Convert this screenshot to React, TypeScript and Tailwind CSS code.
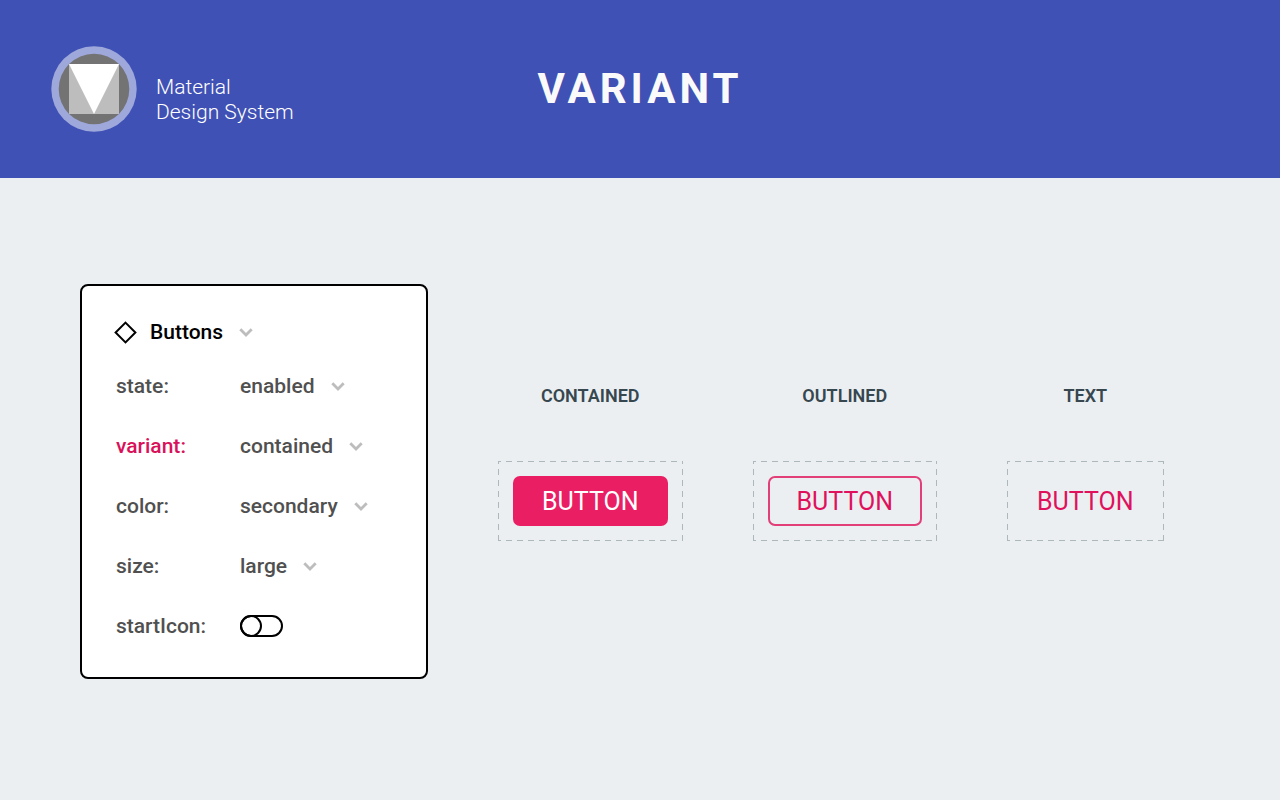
import React, { useState } from 'react';

interface SelectPropertyProps {
  name: string;
  options: string[];
  initial: string;
  highlighted?: boolean;
}

interface VariantPreviewProps {
  title: string;
  buttonClass: string;
}

const Chevron: React.FC = () => (
  <svg className="pointer-events-none w-[14px] h-[10px] shrink-0 -ml-[14px]" viewBox="0 0 14 10" fill="none" stroke="#bdbdbd" strokeWidth="2.8" aria-hidden="true">
    <path d="M1.3 2.3 7 8l5.7-5.7" />
  </svg>
);

const Logo: React.FC = () => (
  <svg className="w-[86px] h-[86px]" viewBox="0 0 86 86" aria-hidden="true">
    <circle cx="43" cy="43" r="42.7" fill="#9fa8da" />
    <circle cx="43" cy="43" r="35.3" fill="#737373" />
    <path d="M18 18h50v50H18z" fill="#bdbdbd" />
    <path d="M18 18h50L43 68z" fill="#fff" />
  </svg>
);

const SelectProperty: React.FC<SelectPropertyProps> = ({ name, options, initial, highlighted }) => {
  const [value, setValue] = useState(initial);

  return (
    <div className="flex items-center">
      <label htmlFor={name} className={`w-[124px] ${highlighted ? 'text-[#d8125b]' : 'text-[#505050]'}`}>{name}:</label>
      <select
        id={name}
        value={value}
        onChange={e => setValue(e.target.value)}
        className="appearance-none [field-sizing:content] bg-transparent pr-[30px] text-[#505050]"
      >
        {options.map(option => <option key={option}>{option}</option>)}
      </select>
      <Chevron />
    </div>
  );
};

// Dashed frame is drawn with gradients, the native dashed border is too dense
const frameClass = 'p-[15px] bg-[repeating-linear-gradient(90deg,#adb8bd_0_3px,transparent_3px_8px,#adb8bd_8px_11px),repeating-linear-gradient(90deg,#adb8bd_0_3px,transparent_3px_8px,#adb8bd_8px_11px),repeating-linear-gradient(#adb8bd_0_3px,transparent_3px_8px,#adb8bd_8px_11px),repeating-linear-gradient(#adb8bd_0_3px,transparent_3px_8px,#adb8bd_8px_11px)] [background-size:100%_1px,100%_1px,1px_100%,1px_100%] [background-position:top,bottom,left,right] bg-no-repeat';

const VariantPreview: React.FC<VariantPreviewProps> = ({ title, buttonClass }) => (
  <section className="flex flex-col items-center gap-[53px]">
    <h2 className="text-[18px] leading-6 font-semibold text-[#37474f]">{title}</h2>
    <div className={frameClass}>
      <button type="button" className={`block h-[50px] pt-[2px] rounded-[7px] text-[25px] leading-7 font-normal ${buttonClass}`}>
        BUTTON
      </button>
    </div>
  </section>
);

const App: React.FC = () => {
  const [startIcon, setStartIcon] = useState(false);

  return (
    <div className="min-h-screen bg-[#ebeff2] font-[Roboto,sans-serif]">
      <header className="grid grid-cols-[1fr_auto_1fr] items-center h-[178px] px-[51px] bg-[#3f51b5] text-white">
        <div className="flex items-center gap-[19px]">
          <Logo />
          <p className="pt-[22px] text-[21px] leading-[25px] font-light">
            Material<br />Design System
          </p>
        </div>
        <h1 className="text-[42px] leading-[48px] font-bold tracking-[4px] text-[#fafafa]">VARIANT</h1>
      </header>

      <main className="flex flex-wrap items-start gap-[70px] pt-[106px] px-20 pb-20">
        <div className="w-[348px] bg-white border-2 border-black rounded-[8px] pt-[32px] pb-[37px] px-[34px] text-[21px] leading-7 font-medium">
          <div className="flex items-center mb-[26px]">
            <svg className="overflow-visible w-[22px] h-[23px] mr-3" viewBox="0 0 22 23" fill="none" stroke="#000" strokeWidth="2" aria-hidden="true">
              <path d="M9.5 1.6 19.4 11.5 9.5 21.4-.4 11.5z" />
            </svg>
            <select aria-label="Component" className="appearance-none [field-sizing:content] bg-transparent pr-[30px] text-black">
              <option>Buttons</option>
            </select>
            <Chevron />
          </div>
          <div className="flex flex-col gap-8">
            <SelectProperty name="state" options={['enabled', 'hovered', 'focused', 'disabled']} initial="enabled" />
            <SelectProperty name="variant" options={['contained', 'outlined', 'text']} initial="contained" highlighted />
            <SelectProperty name="color" options={['primary', 'secondary']} initial="secondary" />
            <SelectProperty name="size" options={['small', 'medium', 'large']} initial="large" />
            <div className="flex items-center">
              <label htmlFor="startIcon" className="w-[124px] text-[#505050]">startIcon:</label>
              <input
                id="startIcon"
                type="checkbox"
                checked={startIcon}
                onChange={e => setStartIcon(e.target.checked)}
                className="appearance-none w-[43px] h-[22px] rounded-full border-2 border-black before:block before:w-[22px] before:h-[22px] before:-m-[2px] before:rounded-full before:border-2 before:border-black checked:before:ml-[19px]"
              />
            </div>
          </div>
        </div>

        <div className="flex gap-[70px] pt-[100px]">
          <VariantPreview title="CONTAINED" buttonClass="px-[29px] bg-[#e91e63] text-white" />
          <VariantPreview title="OUTLINED" buttonClass="px-[27px] border-2 border-[#e23f78] text-[#e0115c]" />
          <VariantPreview title="TEXT" buttonClass="px-[15px] text-[#e0115c]" />
        </div>
      </main>
    </div>
  );
};

export default App;
